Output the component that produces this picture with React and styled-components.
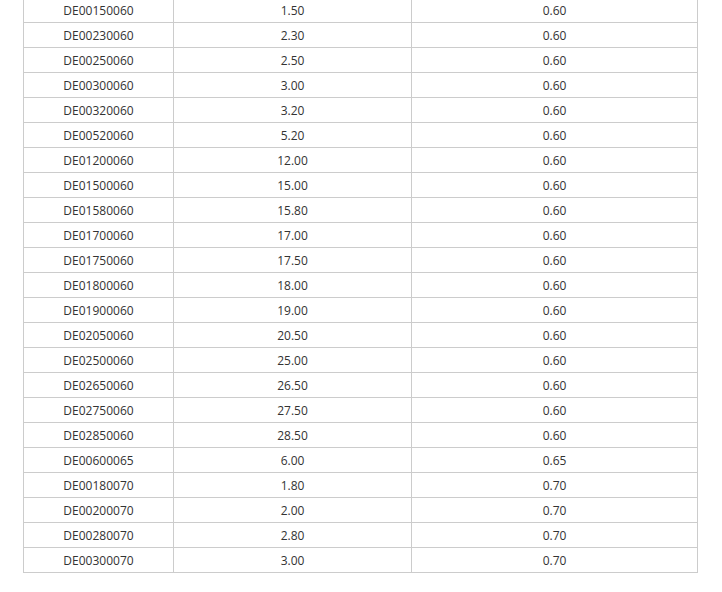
import React from 'react';
import styled, { createGlobalStyle } from 'styled-components';

const GlobalStyle = createGlobalStyle`
  html, body {
    margin: 0;
    padding: 0;
    background: #fff;
  }
  body {
    font-family: "Open Sans", "Noto Sans", sans-serif;
    color: #333;
  }
`;

const Wrapper = styled.div`
  padding: 0 0 0 23px;
  margin-top: -3px;
`;

const Table = styled.table`
  width: 675px;
  border-collapse: collapse;
  table-layout: fixed;
  font-size: 12px;
`;

const Col = styled.col`
  width: ${(p) => p.$w}px;
`;

const Cell = styled.td`
  height: 23px;
  padding: 1px 0 0;
  border: 1px solid #ccc;
  text-align: center;
  vertical-align: middle;
  line-height: 23px;
  color: #333;
`;

const rows = [
  ['DE00150060', '1.50', '0.60'],
  ['DE00230060', '2.30', '0.60'],
  ['DE00250060', '2.50', '0.60'],
  ['DE00300060', '3.00', '0.60'],
  ['DE00320060', '3.20', '0.60'],
  ['DE00520060', '5.20', '0.60'],
  ['DE01200060', '12.00', '0.60'],
  ['DE01500060', '15.00', '0.60'],
  ['DE01580060', '15.80', '0.60'],
  ['DE01700060', '17.00', '0.60'],
  ['DE01750060', '17.50', '0.60'],
  ['DE01800060', '18.00', '0.60'],
  ['DE01900060', '19.00', '0.60'],
  ['DE02050060', '20.50', '0.60'],
  ['DE02500060', '25.00', '0.60'],
  ['DE02650060', '26.50', '0.60'],
  ['DE02750060', '27.50', '0.60'],
  ['DE02850060', '28.50', '0.60'],
  ['DE00600065', '6.00', '0.65'],
  ['DE00180070', '1.80', '0.70'],
  ['DE00200070', '2.00', '0.70'],
  ['DE00280070', '2.80', '0.70'],
  ['DE00300070', '3.00', '0.70'],
];

const App = () => {
  return (
    <>
      <GlobalStyle />
      <Wrapper>
        <Table>
          <colgroup>
            <Col $w={150} />
            <Col $w={238} />
            <Col $w={286} />
          </colgroup>
          <tbody>
            {rows.map((r) => (
              <tr key={r[0]}>
                <Cell>{r[0]}</Cell>
                <Cell>{r[1]}</Cell>
                <Cell>{r[2]}</Cell>
              </tr>
            ))}
          </tbody>
        </Table>
      </Wrapper>
    </>
  );
};

export default App;
